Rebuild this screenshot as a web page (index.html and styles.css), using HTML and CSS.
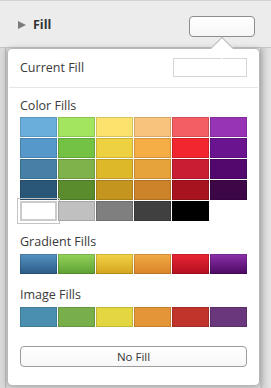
FILE: index.html
```html
<!DOCTYPE html>
<html lang="en">
<head>
    <meta charset="UTF-8">
    <meta name="viewport" content="width=device-width, initial-scale=1.0">
    <title>Fill</title>
    <link rel="stylesheet" href="styles.css">
</head>
<body>
    <header class="inspector-row">
        <div class="row-title">
            <svg class="disclosure" width="8" height="8" viewBox="0 0 8 8"><path d="M0 0 L8 4 L0 8 Z" fill="#7b7b7b"/></svg>
            <span>Fill</span>
        </div>
        <div class="well-button"></div>
    </header>

    <div class="stage">
        <div class="popover">
            <div class="current-row">
                <span class="label">Current Fill</span>
                <div class="current-well"></div>
            </div>
            <div class="separator"></div>

            <div class="label section">Color Fills</div>
            <div class="swatch-grid">
                <div class="swatch" style="background:#6aafdc"></div>
                <div class="swatch" style="background:#a3e55e"></div>
                <div class="swatch" style="background:#fbe36d"></div>
                <div class="swatch" style="background:#f6c47c"></div>
                <div class="swatch" style="background:#f35d64"></div>
                <div class="swatch" style="background:#9634b5"></div>

                <div class="swatch" style="background:#5598c9"></div>
                <div class="swatch" style="background:#73c244"></div>
                <div class="swatch" style="background:#edd141"></div>
                <div class="swatch" style="background:#f5ad46"></div>
                <div class="swatch" style="background:#f2262f"></div>
                <div class="swatch" style="background:#6a1490"></div>

                <div class="swatch" style="background:#4680a6"></div>
                <div class="swatch" style="background:#80b24b"></div>
                <div class="swatch" style="background:#ddb92a"></div>
                <div class="swatch" style="background:#e6a33b"></div>
                <div class="swatch" style="background:#c91d34"></div>
                <div class="swatch" style="background:#52086d"></div>

                <div class="swatch" style="background:#2a5778"></div>
                <div class="swatch" style="background:#5a8c2e"></div>
                <div class="swatch" style="background:#c4961f"></div>
                <div class="swatch" style="background:#cc8329"></div>
                <div class="swatch" style="background:#a7141f"></div>
                <div class="swatch" style="background:#3d0747"></div>

                <div class="swatch selected"></div>
                <div class="swatch" style="background:#c0c0c0"></div>
                <div class="swatch" style="background:#7f7f7f"></div>
                <div class="swatch" style="background:#404040"></div>
                <div class="swatch" style="background:#000000"></div>
            </div>

            <div class="label section gap-top">Gradient Fills</div>
            <div class="swatch-row">
                <div class="swatch grad-blue"></div>
                <div class="swatch grad-green"></div>
                <div class="swatch grad-yellow"></div>
                <div class="swatch grad-orange"></div>
                <div class="swatch grad-red"></div>
                <div class="swatch grad-purple"></div>
            </div>

            <div class="label section gap-top">Image Fills</div>
            <div class="swatch-row">
                <div class="swatch" style="background:#4a8eb0"></div>
                <div class="swatch" style="background:#78af4b"></div>
                <div class="swatch" style="background:#e3d641"></div>
                <div class="swatch" style="background:#e39538"></div>
                <div class="swatch" style="background:#c0342b"></div>
                <div class="swatch" style="background:#6a367c"></div>
            </div>

            <button class="no-fill">No Fill</button>
        </div>
    </div>
</body>
</html>
```

FILE: styles.css
```css
/* General Styles */
body {
    margin: 0;
    padding: 0;
    width: 271px;
    height: 388px;
    overflow: hidden;
    font-family: 'Open Sans', 'Liberation Sans', sans-serif;
    color: #3a3a3a;
    background: #ececec;
}

/* Inspector row behind the popover */
.inspector-row {
    height: 48px;
    box-sizing: border-box;
    border-top: 1px solid #d2d2d2;
    border-bottom: 1px solid #c6c6c6;
    background: #ececec;
    display: flex;
    align-items: center;
    justify-content: space-between;
    padding: 0 16px 0 18px;
}

.row-title {
    display: flex;
    align-items: center;
    gap: 7px;
    font-size: 12.5px;
    font-weight: 700;
    color: #333;
}

.disclosure {
    margin-top: 1px;
}

.well-button {
    width: 66px;
    height: 21px;
    box-sizing: border-box;
    border: 1px solid #8d8d8d;
    border-radius: 4px;
    background: linear-gradient(#ffffff, #f6f6f6);
    margin-top: 4px;
}

/* Area under the popover */
.stage {
    padding: 0 11px 0 7px;
    height: 340px;
    background:
        linear-gradient(to right, #dadada 0, #dadada 5px, #bfbfbf 5px, #bfbfbf 6px, #d2d2d2 6px, #d2d2d2 7px, transparent 7px),
        linear-gradient(to left, #e6e6e6 0, #d6d6d6 6px, #c4c4c4 11px, transparent 11px),
        #dcdcdc;
}

.popover {
    position: relative;
    width: 253px;
    box-sizing: border-box;
    background: #fff;
    border: 1px solid #b8b8b8;
    border-radius: 5px;
    padding: 9px 12px 18px;
    box-shadow: 0 1px 6px rgba(0, 0, 0, 0.25);
}

.popover::before {
    content: "";
    position: absolute;
    top: -9px;
    left: 206px;
    width: 16px;
    height: 16px;
    background: #fff;
    border-top: 1px solid #b8b8b8;
    border-left: 1px solid #b8b8b8;
    box-sizing: border-box;
    transform: rotate(45deg);
}

.label {
    font-size: 12.5px;
    line-height: 15px;
    color: #3a3a3a;
}

.current-row {
    height: 19px;
    display: flex;
    align-items: center;
    justify-content: space-between;
}

.current-well {
    width: 74px;
    height: 19px;
    box-sizing: border-box;
    border: 1px solid #d6d6d6;
    background: #fff;
}

.separator {
    height: 1px;
    background: #e6e6e6;
    margin: 10px -11px 0;
}

.section {
    margin-top: 10px;
}

.section.gap-top {
    margin-top: 13px;
}

.swatch-grid {
    display: grid;
    grid-template-columns: repeat(6, 37px);
    grid-auto-rows: 20px;
    gap: 1px;
    margin-top: 4px;
}

.swatch-row {
    display: grid;
    grid-template-columns: repeat(6, 37px);
    grid-auto-rows: 20px;
    gap: 1px;
    margin-top: 5px;
}

.swatch {
    box-shadow: inset 0 0 0 1px rgba(0, 0, 0, 0.14);
}

.swatch.selected {
    background: #fff;
    box-shadow: none;
    border: 2px solid #cbcbcb;
    outline: 1px solid #c4c4c4;
    outline-offset: 2px;
}

.grad-blue { background: linear-gradient(#5592c2, #2b5b86); }
.grad-green { background: linear-gradient(#93d35a, #5e9f33); }
.grad-yellow { background: linear-gradient(#f3d447, #d3a31d); }
.grad-orange { background: linear-gradient(#f1aa45, #d98429); }
.grad-red { background: linear-gradient(#e82534, #b40f20); }
.grad-purple { background: linear-gradient(#8c30aa, #4c0963); }

.no-fill {
    display: block;
    width: 100%;
    height: 21px;
    margin-top: 19px;
    padding: 0;
    border: 1px solid #9c9c9c;
    border-radius: 4px;
    background: linear-gradient(#ffffff, #f7f7f7);
    font-family: 'Open Sans', 'Liberation Sans', sans-serif;
    font-size: 11.5px;
    color: #333;
    cursor: pointer;
}
```
